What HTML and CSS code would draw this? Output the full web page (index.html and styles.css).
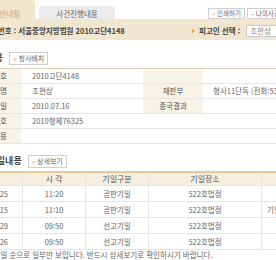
FILE: index.html
```html
<!DOCTYPE html>
<html lang="ko">
<head>
    <meta charset="UTF-8">
    <title>사건검색 결과</title>
    <link rel="stylesheet" href="styles.css">
</head>
<body>
    <div class="page">
        <div class="tabbar">
            <div class="tab on">사건일반내용</div>
            <div class="tab">사건진행내용</div>
            <div class="tools">
                <span class="btn"><em>»</em> 인쇄하기</span>
                <span class="btn"><em>»</em> 나의사건 검색하기</span>
            </div>
        </div>
        <div class="casebar">
            <b class="caseno">사건번호 : 서울중앙지방법원 2010고단4148</b>
            <span class="pick"><i class="arr"></i><b>피고인 선택 :</b><span class="sel">조현상</span></span>
        </div>

        <div class="sect first">
            <h3>기본내용</h3>
            <span class="btn"><em>»</em> 청사배치</span>
        </div>
        <table class="info">
            <colgroup>
                <col class="c1"><col class="c2"><col class="c3"><col>
            </colgroup>
            <tr><th>사건번호</th><td>2010고단4148</td><th></th><td></td></tr>
            <tr><th>피고인명</th><td>조현상</td><th>재판부</th><td>형사11단독 (전화:530-1811)</td></tr>
            <tr><th>접수일</th><td>2010.07.16</td><th>종국결과</th><td></td></tr>
            <tr><th>검찰사건번호</th><td colspan="3">2010형제76325</td></tr>
            <tr><th>병합내용</th><td colspan="3"></td></tr>
        </table>

        <div class="sect near">
            <h3>최근기일내용</h3>
            <span class="btn"><em>»</em> 상세보기</span>
        </div>
        <table class="dates">
            <colgroup>
                <col class="d1"><col class="d2"><col class="d3"><col class="d4"><col>
            </colgroup>
            <tr><th>일 자</th><th>시 각</th><th>기일구분</th><th>기일장소</th><th>결 과</th></tr>
            <tr><td class="day">2010.08.25</td><td>11:20</td><td>공판기일</td><td>522호법정</td><td class="rs"></td></tr>
            <tr><td class="day">2010.09.15</td><td>11:10</td><td>공판기일</td><td>522호법정</td><td class="rs">기일변경</td></tr>
            <tr><td class="day">2010.09.29</td><td>09:50</td><td>선고기일</td><td>522호법정</td><td class="rs"></td></tr>
            <tr><td class="day">2010.10.26</td><td>09:50</td><td>선고기일</td><td>522호법정</td><td class="rs"></td></tr>
        </table>
        <p class="note">※ 최근 기일 순으로 일부만 보입니다. 반드시 상세보기로 확인하시기 바랍니다.</p>
    </div>
</body>
</html>
```

FILE: styles.css
```css
*{
    padding: 0;
    margin: 0;
}
body{
    overflow: hidden;
    background: #fff;
    font-family: "Noto Sans CJK KR", "Noto Sans", sans-serif;
    font-size: 7.5px;
    color: #666;
}
.page{
    width: 420px;
    margin-left: -60px;
}

/* tabs */
.tabbar{
    display: flex;
    align-items: flex-end;
    height: 19px;
}
.tab{
    height: 13px;
    line-height: 16px;
    text-align: center;
    border-radius: 3px 3px 0 0;
    background: #ececec;
    color: #666;
    width: 76px;
    margin-left: 4px;
}
.tab.on{
    width: 71px;
    height: 19px;
    line-height: 28px;
    margin-left: 24px;
    background: #f1e5cb;
    color: #c4aa84;
}
.tools{
    display: flex;
    gap: 2px;
    margin-left: 93px;
    align-self: flex-start;
    margin-top: 8px;
}
.btn{
    display: inline-block;
    height: 9px;
    line-height: 9px;
    padding: 0 3px;
    border: 1px solid #cfcfcf;
    background: #fff;
    font-size: 6.5px;
    color: #666;
    white-space: nowrap;
}
.btn em{
    font-style: normal;
    color: #e0a050;
}

/* case bar */
.casebar{
    display: flex;
    align-items: center;
    box-sizing: border-box;
    height: 21px;
    padding: 2px 0 0 44px;
    background: #f1e6cf;
}
.caseno{
    width: 206px;
    color: #444;
}
.pick{
    display: flex;
    align-items: center;
}
.arr{
    width: 0;
    height: 0;
    border-left: 3px solid #e8a040;
    border-top: 2.5px solid transparent;
    border-bottom: 2.5px solid transparent;
    margin: 0 4px 0 2px;
}
.pick b{
    color: #444;
}
.sel{
    display: inline-block;
    height: 10px;
    line-height: 10px;
    width: 60px;
    margin-left: 6px;
    padding-left: 3px;
    border: 1px solid #c8c8c8;
    background: #fff;
    color: #888;
}

/* section titles */
.sect{
    display: flex;
    align-items: center;
    gap: 6px;
    padding-left: 30px;
}
.sect.first{
    height: 18px;
    padding-top: 9px;
    padding-bottom: 1px;
}
.sect.near{
    height: 14px;
    padding-top: 10px;
    padding-bottom: 3px;
    padding-left: 32px;
}
.sect h3{
    font-size: 9px;
    line-height: 12px;
    color: #444;
}
.sect .btn{
    height: 11px;
    line-height: 11px;
    font-size: 7px;
}

/* tables */
table{
    border-collapse: collapse;
    table-layout: fixed;
    width: 420px;
}
.info{
    border-top: 1px solid #dcd0b6;
}
.info .c1{width: 82px;}
.info .c2{width: 121px;}
.info .c3{width: 60px;}
.info th,
.info td{
    height: 14px;
    line-height: 14px;
    border-bottom: 1px solid #e6e6e6;
    font-weight: normal;
    white-space: nowrap;
    overflow: hidden;
}
.info th{
    background: #f8f3e8;
    color: #555;
}
.info tr th:first-child{
    text-align: right;
    padding-right: 15px;
}
.info td{
    padding-left: 10px;
    text-align: left;
}

.dates{
    border-top: 2px solid #ecc79a;
}
.dates .d1{width: 82px;}
.dates .d2{width: 63px;}
.dates .d3{width: 63px;}
.dates .d4{width: 113px;}
.dates th,
.dates td{
    height: 15px;
    line-height: 15px;
    border: 1px solid #e4e4e4;
    border-top: none;
    text-align: center;
    white-space: nowrap;
    overflow: hidden;
}
.dates th{
    height: 12px;
    line-height: 12px;
    background: #f6efdf;
    font-weight: normal;
    color: #555;
    font-size: 8px;
}
.dates .day{
    text-align: right;
    padding-right: 14px;
}
.dates .rs{
    text-align: left;
    padding-left: 5px;
}
.note{
    height: 10px;
    line-height: 10px;
    padding-left: 28px;
    color: #666;
}
```
